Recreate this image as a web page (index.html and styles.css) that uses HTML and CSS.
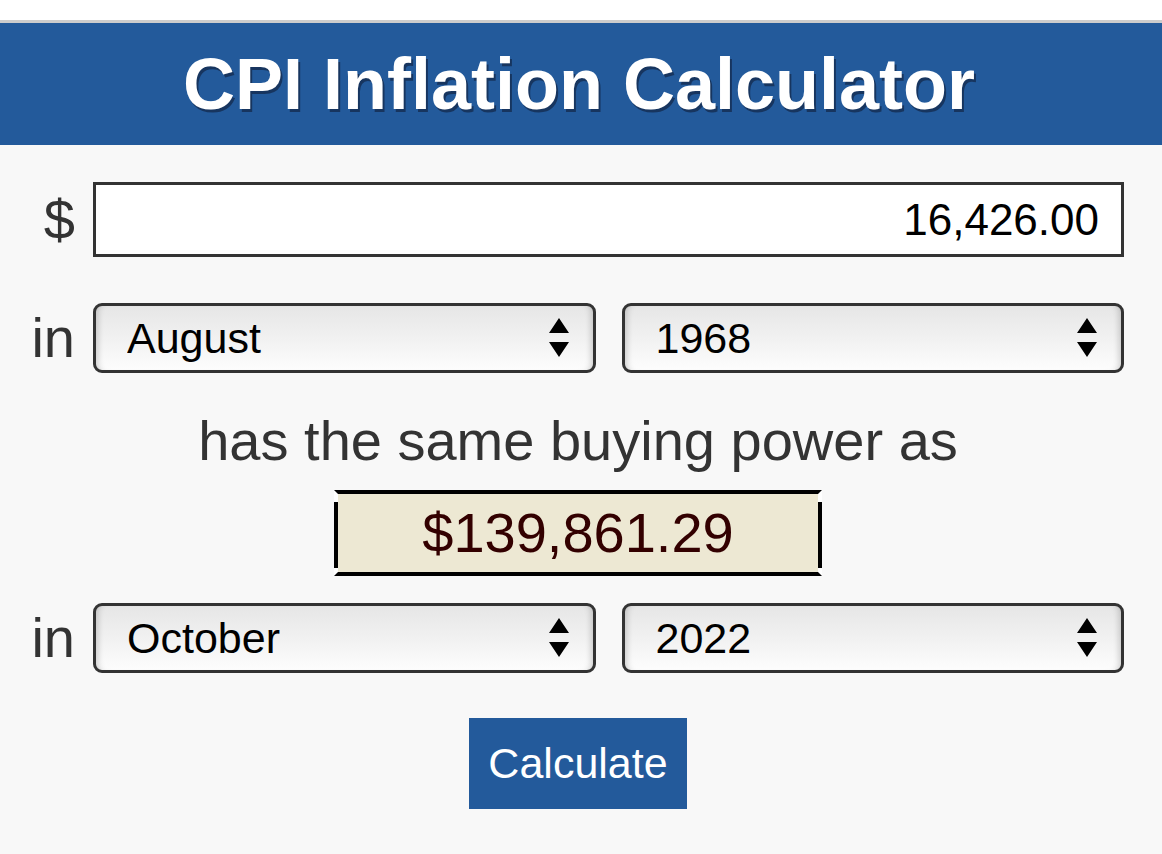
FILE: index.html
```html
<!doctype html>
<html>

<head>
    <meta name="viewport" content="width=device-width,initial-scale=1.0">
    <meta charset="utf-8" />
    <title>CPI Inflation Calculator</title>
    <link rel="stylesheet" href="styles.css">
</head>

<body>
    <div class="page-top"></div>
    <header class="calc-head">
        <h1 class="calc-head__title">CPI Inflation Calculator</h1>
    </header>
    <form class="calc">
        <div class="calc__row calc__row--amount">
            <label class="calc__label" for="amount">$</label>
            <input class="calc__amount" id="amount" type="text" value="16,426.00">
        </div>
        <div class="calc__row calc__row--date">
            <span class="calc__label">in</span>
            <div class="calc__picks">
                <div class="pick">
                    <select class="pick__select">
                        <option>August</option>
                    </select>
                    <svg class="pick__arrow" width="20" height="40" viewBox="0 0 20 40"><path d="M10 0 L20 15 L0 15 Z M0 24 L20 24 L10 39 Z" fill="#000"/></svg>
                </div>
                <div class="pick">
                    <select class="pick__select">
                        <option>1968</option>
                    </select>
                    <svg class="pick__arrow" width="20" height="40" viewBox="0 0 20 40"><path d="M10 0 L20 15 L0 15 Z M0 24 L20 24 L10 39 Z" fill="#000"/></svg>
                </div>
            </div>
        </div>
        <p class="calc__same">has the same buying power as</p>
        <div class="calc__result">$139,861.29</div>
        <div class="calc__row calc__row--date calc__row--to">
            <span class="calc__label">in</span>
            <div class="calc__picks">
                <div class="pick">
                    <select class="pick__select">
                        <option>October</option>
                    </select>
                    <svg class="pick__arrow" width="20" height="40" viewBox="0 0 20 40"><path d="M10 0 L20 15 L0 15 Z M0 24 L20 24 L10 39 Z" fill="#000"/></svg>
                </div>
                <div class="pick">
                    <select class="pick__select">
                        <option>2022</option>
                    </select>
                    <svg class="pick__arrow" width="20" height="40" viewBox="0 0 20 40"><path d="M10 0 L20 15 L0 15 Z M0 24 L20 24 L10 39 Z" fill="#000"/></svg>
                </div>
            </div>
        </div>
        <div class="calc__submit">
            <button class="calc__btn" type="button">Calculate</button>
        </div>
    </form>
</body>

</html>
```

FILE: styles.css
```css
body {
    margin: 0;
    background: #f8f8f8;
    font-family: "Liberation Sans", Arial, sans-serif;
    color: #333;
}

.page-top {
    height: 20px;
    background: #fff;
    border-bottom: 3px solid #ccc;
}

.calc-head {
    height: 122px;
    background: #235a9b;
    text-align: center;
    padding-right: 4px;
}

.calc-head__title {
    margin: 0;
    font-size: 72px;
    line-height: 122px;
    font-weight: bold;
    color: #fff;
    text-shadow: 2px 3px 0 #17355f;
}

.calc {
    padding: 0 38px 40px 0;
}

.calc__row {
    display: flex;
    align-items: center;
    gap: 13px;
}

.calc__row--amount {
    margin-top: 37px;
}

.calc__row--date {
    margin-top: 46px;
}

.calc__row--to {
    margin-top: 27px;
}

.calc__label {
    flex: 0 0 80px;
    box-sizing: border-box;
    padding-right: 5px;
    text-align: right;
    font-size: 56px;
    line-height: 60px;
    color: #333;
}

.calc__amount {
    flex: 1;
    box-sizing: border-box;
    height: 75px;
    margin: 0;
    border: 3px solid #333;
    border-radius: 0;
    padding: 0 22px 0 10px;
    background: #fff;
    font-family: "Liberation Sans", Arial, sans-serif;
    font-size: 44px;
    color: #000;
    text-align: right;
    outline: none;
}

.calc__picks {
    flex: 1;
    display: flex;
    gap: 26px;
}

.pick {
    position: relative;
    flex: 1;
}

.pick__select {
    display: block;
    width: 100%;
    box-sizing: border-box;
    height: 70px;
    margin: 0;
    border: 3px solid #333;
    border-radius: 9px;
    padding: 0 60px 0 31px;
    -webkit-appearance: none;
    appearance: none;
    background: linear-gradient(#e6e6e6, #f2f2f2 55%, #fdfdfd);
    box-shadow: inset 7px 0 6px -5px rgba(0, 0, 0, .18), inset -7px 0 6px -5px rgba(0, 0, 0, .18);
    font-family: "Liberation Sans", Arial, sans-serif;
    font-size: 43px;
    color: #000;
}

.pick__arrow {
    position: absolute;
    top: 15px;
    right: 27px;
    pointer-events: none;
}

.calc__same {
    margin: 36px 0 0;
    padding-left: 32px;
    text-align: center;
    font-size: 56px;
    line-height: 64px;
    color: #333;
}

.calc__result {
    position: relative;
    box-sizing: border-box;
    width: 488px;
    height: 86px;
    margin: 17px 0 0 334px;
    border-top: 4px solid #000;
    border-bottom: 4px solid #000;
    border-left: 4px solid #fff;
    border-right: 4px solid #fff;
    background: #ede8d3;
    background-clip: padding-box;
    text-align: center;
    font-size: 56px;
    line-height: 78px;
    color: #300;
}

.calc__result::before,
.calc__result::after {
    content: "";
    position: absolute;
    top: 8px;
    bottom: 4px;
    width: 4px;
    background: #000;
}

.calc__result::before {
    left: -4px;
}

.calc__result::after {
    right: -4px;
}

.calc__submit {
    margin-top: 45px;
    padding-left: 469px;
}

.calc__btn {
    display: block;
    width: 218px;
    height: 91px;
    margin: 0;
    border: 0;
    padding: 0;
    background: #235a9b;
    font-family: "Liberation Sans", Arial, sans-serif;
    font-size: 43px;
    color: #fff;
}
```
